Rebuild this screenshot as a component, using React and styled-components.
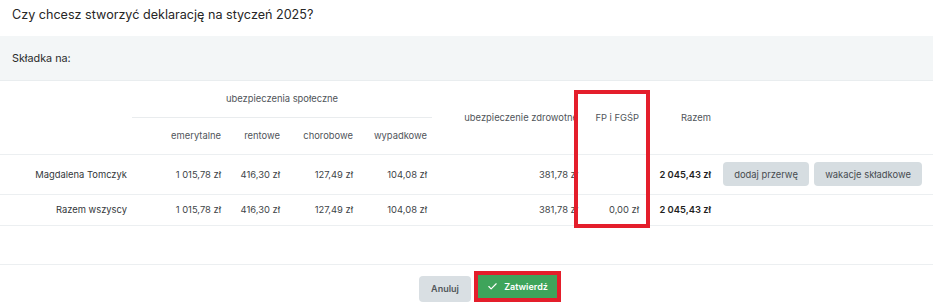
import React from 'react';
import styled, {createGlobalStyle} from 'styled-components';
import {Check} from 'lucide-react';

const GlobalStyle = createGlobalStyle`
    body {
        margin: 0;
        background: #ffffff;
        font-family: Inter, "Noto Sans", sans-serif;
        color: #333333;
    }
`;

const columns = [132, 94, 59, 73, 74, 151, 61, 72, 217];

const rows = [
    {
        name: 'Magdalena Tomczyk',
        values: ['1 015,78 zł', '416,30 zł', '127,49 zł', '104,08 zł', '381,78 zł', ''],
        total: '2 045,43 zł',
        actions: true
    },
    {
        name: 'Razem wszyscy',
        values: ['1 015,78 zł', '416,30 zł', '127,49 zł', '104,08 zł', '381,78 zł', '0,00 zł'],
        total: '2 045,43 zł',
        actions: false
    }
];

class App extends React.Component {
    render() {
        return (
            <Modal>
                <GlobalStyle/>
                <Title>Czy chcesz stworzyć deklarację na styczeń 2025?</Title>
                <Section>Składka na:</Section>
                <TableWrapper>
                    <Table>
                        <colgroup>
                            {columns.map((w, i) => <Col key={i} width={w}/>)}
                        </colgroup>
                        <thead>
                        <HeadRow height={36}>
                            <Th rowSpan={2}/>
                            <Th colSpan={4} center underline>ubezpieczenia społeczne</Th>
                            <Th rowSpan={2}>ubezpieczenie zdrowotne</Th>
                            <Th rowSpan={2}>FP i FGŚP</Th>
                            <Th rowSpan={2}>Razem</Th>
                            <Th rowSpan={2}/>
                        </HeadRow>
                        <HeadRow height={37}>
                            <Th>emerytalne</Th>
                            <Th>rentowe</Th>
                            <Th>chorobowe</Th>
                            <Th>wypadkowe</Th>
                        </HeadRow>
                        </thead>
                        <tbody>
                        {rows.map((row, i) => (
                            <Row key={i} height={row.actions ? 40 : 31}>
                                <Name>{row.name}</Name>
                                {row.values.map((v, j) => <Td key={j}>{v}</Td>)}
                                <Td bold>{row.total}</Td>
                                <Actions>
                                    {row.actions && (
                                        <ActionGroup>
                                            <GrayButton width={86}>dodaj przerwę</GrayButton>
                                            <GrayButton width={108}>wakacje składkowe</GrayButton>
                                        </ActionGroup>
                                    )}
                                </Actions>
                            </Row>
                        ))}
                        </tbody>
                    </Table>
                    <Highlight/>
                </TableWrapper>
                <Footer>
                    <CancelButton>Anuluj</CancelButton>
                    <Marked>
                        <ConfirmButton><Check size={11} strokeWidth={2.5}/>Zatwierdź</ConfirmButton>
                    </Marked>
                </Footer>
            </Modal>
        )
    }
}

export default App;

const
    Modal = styled.div`
        width: 933px;
        height: 306px;
        background: #ffffff;
        overflow: hidden;
    `,
    Title = styled.div`
        height: 36px;
        box-sizing: border-box;
        padding: 6px 12px 0;
        font-size: 12.6px;
        line-height: 18px;
        color: #262626;
    `,
    Section = styled.div`
        height: 45px;
        box-sizing: border-box;
        padding: 14px 12px 0;
        background: #f3f6f7;
        border-bottom: 1px solid #e9edef;
        font-size: 10.8px;
        line-height: 18px;
        color: #2a2a2a;
    `,
    TableWrapper = styled.div`
        position: relative;
        height: 183px;
        border-bottom: 1px solid #eceff1;
    `,
    Table = styled.table`
        table-layout: fixed;
        width: 933px;
        border-collapse: collapse;
        font-size: 9.4px;
    `,
    Col = styled.col`
        width: ${props => props.width}px;
    `,
    HeadRow = styled.tr`
        height: ${props => props.height}px;
    `,
    Th = styled.th`
        padding: 0 5px;
        font-weight: 400;
        color: #50555a;
        white-space: nowrap;
        overflow: visible;
        text-align: ${props => props.center ? 'center' : 'right'};
        border-bottom: ${props => props.underline ? '1px solid #e9ecee' : 'none'};
        vertical-align: middle;
    `,
    Row = styled.tr`
        height: ${props => props.height}px;
        border-top: 1px solid #eceff1;
        &:last-child {
            border-bottom: 1px solid #eceff1;
        }
    `,
    Td = styled.td`
        padding: 0 5px;
        text-align: right;
        white-space: nowrap;
        color: ${props => props.bold ? '#1f1f1f' : '#404447'};
        font-weight: ${props => props.bold ? 600 : 400};
    `,
    Name = styled(Td)`
        color: #33373a;
    `,
    Actions = styled.td`
        padding: 0 0 0 7px;
    `,
    ActionGroup = styled.div`
        display: flex;
        gap: 5px;
    `,
    GrayButton = styled.button`
        width: ${props => props.width}px;
        height: 24px;
        border: 0;
        border-radius: 4px;
        background: #d6dde1;
        color: #474c50;
        font-family: Inter, sans-serif;
        font-size: 9.4px;
        padding: 0;
    `,
    Highlight = styled.div`
        position: absolute;
        left: 574px;
        top: 9px;
        width: 76px;
        height: 138px;
        box-sizing: border-box;
        border: 4px solid #e41e2b;
        pointer-events: none;
    `,
    Footer = styled.div`
        display: flex;
        justify-content: center;
        align-items: center;
        gap: 3px;
        padding: 6px 0 0 47px;
    `,
    CancelButton = styled.button`
        width: 52px;
        height: 26px;
        border: 0;
        border-radius: 4px;
        background: #d9dfe3;
        color: #52575b;
        font-family: Inter, sans-serif;
        font-size: 9px;
        font-weight: 600;
        padding: 0;
        margin-top: 4px;
    `,
    Marked = styled.div`
        border: 4px solid #e41e2b;
        display: flex;
    `,
    ConfirmButton = styled.button`
        display: flex;
        align-items: center;
        justify-content: center;
        gap: 6px;
        width: 79px;
        height: 23px;
        border: 0;
        background: #3fa45b;
        color: #ffffff;
        font-family: Inter, sans-serif;
        font-size: 9px;
        font-weight: 600;
        padding: 0;
    `;
